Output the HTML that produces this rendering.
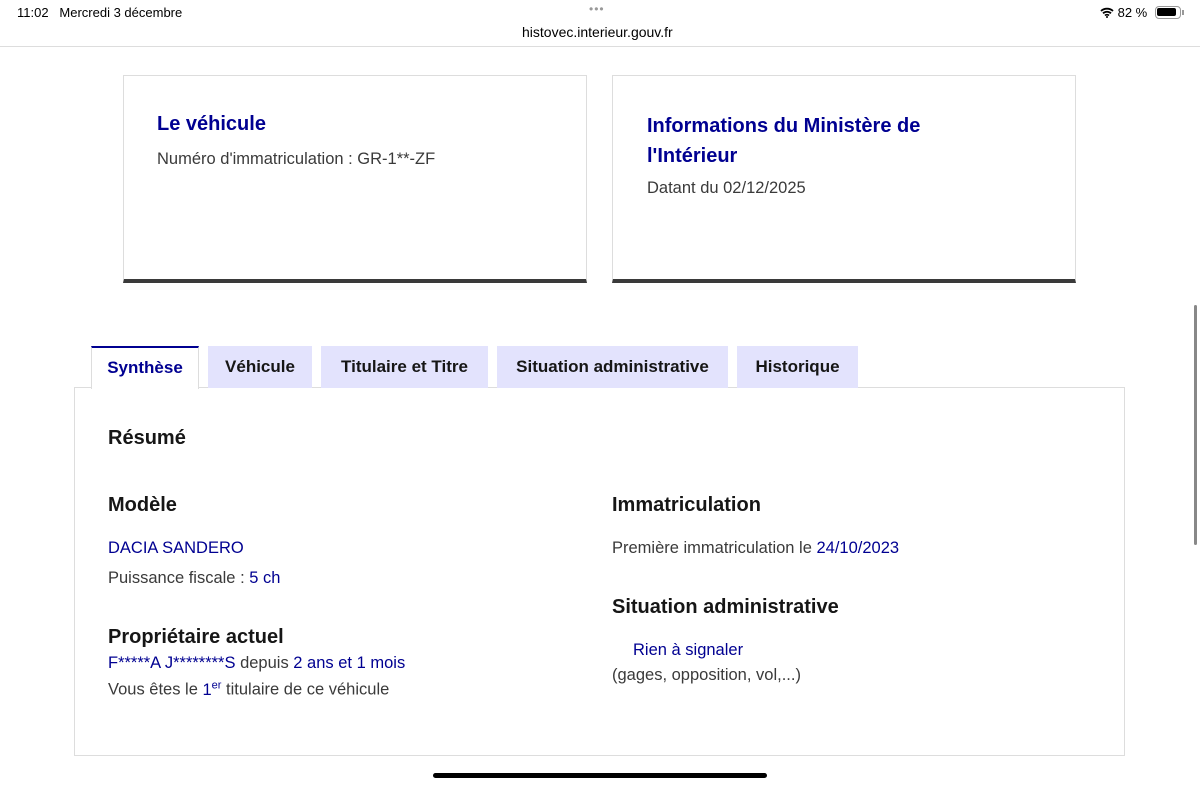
<!DOCTYPE html>
<html><head><meta charset="utf-8"><style>
*{margin:0;padding:0;box-sizing:border-box}
body{width:1200px;height:788px;background:#fff;font-family:"Liberation Sans",sans-serif;position:relative;overflow:hidden;color:#3a3a3a}
.a{position:absolute;white-space:nowrap}
.t{font-size:16.5px;color:#3a3a3a}
.blue,.t.blue{color:#000091}
.card{position:absolute;top:75px;width:464px;height:208px;border:1px solid #ddd;border-bottom:4px solid #3a3a3a}
.tab{position:absolute;top:346px;height:42px;background:#e3e3fd;color:#161616;font-weight:bold;font-size:17px;text-align:center;line-height:42px}
h3{font-size:20px;font-weight:bold;color:#161616}
</style></head><body>
<div class="a" style="left:17px;top:5px;font-size:13px;color:#000">11:02&nbsp;&nbsp; Mercredi 3 décembre</div>
<div class="a" style="left:589px;top:2px;font-size:12px;color:#999;letter-spacing:1px">•••</div>
<div class="a" style="left:522px;top:24px;font-size:14px;color:#000">histovec.interieur.gouv.fr</div>
<div class="a" style="left:1100px;top:5px;font-size:13px;color:#000">
<svg width="14" height="11" viewBox="0 0 14 11" style="vertical-align:-1px"><path d="M1 4a9 9 0 0 1 12 0M3 6.3a6 6 0 0 1 8 0M5 8.5a3 3 0 0 1 4 0" stroke="#000" stroke-width="1.8" fill="none"/><circle cx="7" cy="10" r="1" fill="#000"/></svg> 82 %</div>
<div class="a" style="left:1155px;top:6px;width:26px;height:13px;border:1.5px solid #999;border-radius:4px;padding:1px"><div style="width:19px;height:8px;background:#000;border-radius:2px"></div></div>
<div class="a" style="left:1182px;top:10px;width:2px;height:5px;background:#999"></div>
<div class="a" style="left:0;top:46px;width:1200px;height:1px;background:#ddd"></div>

<div class="card" style="left:123px">
<div class="a blue" style="left:33px;top:37px;font-size:20px;font-weight:bold">Le véhicule</div>
<div class="a t" style="left:33px;top:74px">Numéro d'immatriculation : GR-1**-ZF</div>
</div>
<div class="card" style="left:612px">
<div class="a blue" style="left:34px;top:35px;font-size:20px;font-weight:bold;line-height:30px;white-space:normal;width:320px">Informations du Ministère de l'Intérieur</div>
<div class="a t" style="left:34px;top:103px">Datant du 02/12/2025</div>
</div>

<div class="a" style="left:74px;top:387px;width:1051px;height:369px;border:1px solid #ddd"></div>
<div class="a" style="left:91px;top:346px;width:108px;height:43px;background:#fff;border:1px solid #ddd;border-top:2px solid #000091;border-bottom:none;color:#000091;font-weight:bold;font-size:17px;text-align:center;line-height:40px">Synthèse</div>
<div class="tab" style="left:208px;width:104px">Véhicule</div>
<div class="tab" style="left:321px;width:167px">Titulaire et Titre</div>
<div class="tab" style="left:497px;width:231px">Situation administrative</div>
<div class="tab" style="left:737px;width:121px">Historique</div>

<h3 class="a" style="left:108px;top:427px">Résumé</h3>
<h3 class="a" style="left:108px;top:494px">Modèle</h3>
<div class="a t blue" style="left:108px;top:539px">DACIA SANDERO</div>
<div class="a t" style="left:108px;top:569px">Puissance fiscale : <span class="blue">5 ch</span></div>
<h3 class="a" style="left:108px;top:626px">Propriétaire actuel</h3>
<div class="a t" style="left:108px;top:654px"><span class="blue">F*****A J********S</span> depuis <span class="blue">2 ans et 1 mois</span></div>
<div class="a t" style="left:108px;top:679px">Vous êtes le <span class="blue">1<sup style="font-size:11px">er</sup></span> titulaire de ce véhicule</div>

<h3 class="a" style="left:612px;top:494px">Immatriculation</h3>
<div class="a t" style="left:612px;top:539px">Première immatriculation le <span class="blue">24/10/2023</span></div>
<h3 class="a" style="left:612px;top:596px">Situation administrative</h3>
<div class="a t blue" style="left:633px;top:641px">Rien à signaler</div>
<div class="a t" style="left:612px;top:666px">(gages, opposition, vol,...)</div>

<div class="a" style="left:433px;top:773px;width:334px;height:5px;background:#000;border-radius:3px"></div>
<div class="a" style="left:1194px;top:305px;width:3px;height:240px;background:#888;border-radius:2px"></div>
</body></html>
